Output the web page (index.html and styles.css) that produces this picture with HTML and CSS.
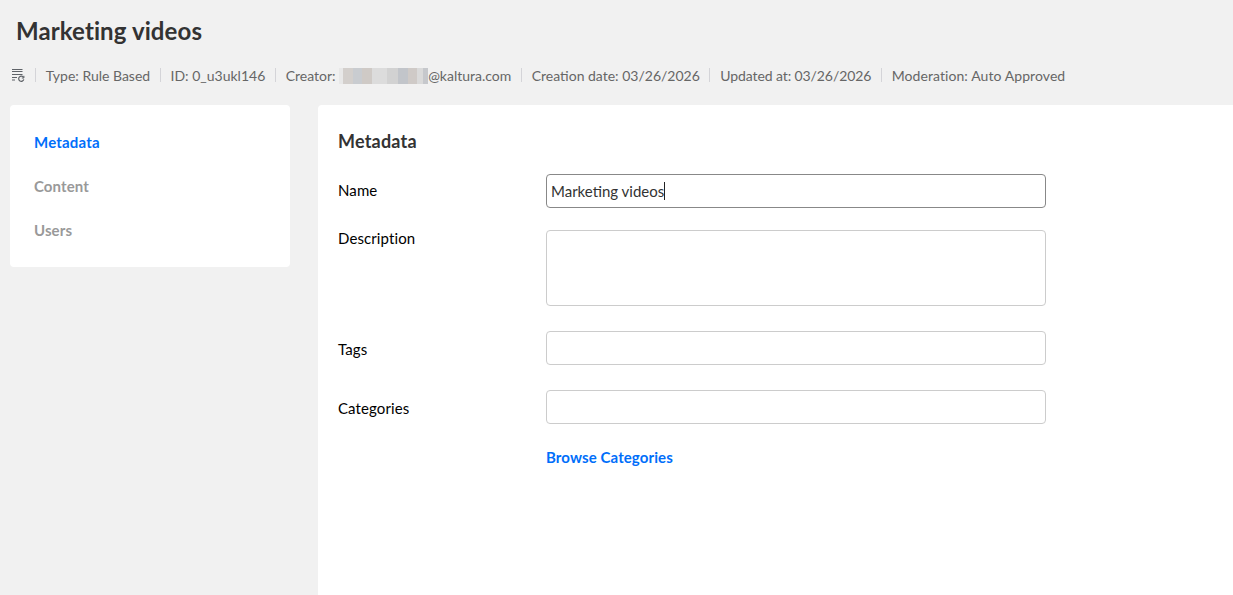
FILE: index.html
```html
<!DOCTYPE html>
<html lang="en">
<head>
<meta charset="utf-8">
<title>Marketing videos</title>
<link rel="stylesheet" href="styles.css">
</head>
<body>
<header class="head">
  <h1 class="title">Marketing videos</h1>
  <div class="meta">
    <svg class="meta-icon" width="14" height="14" viewBox="0 0 14 14" fill="none" stroke="#5f6368">
      <path d="M1 1.5h10.5M1 3.5h10.5M1 6.5h10.5M1 9.5h5M1 12h3" stroke-width="1.2"/>
      <path d="M12.6 9.6a2.6 2.6 0 1 0 .2 1.8" stroke-width="1.2"/>
      <path d="M12.9 7.8v2.2h-2.1" stroke-width="1"/>
    </svg>
    <span class="sep"></span><span>Type: Rule Based</span>
    <span class="sep"></span><span>ID: 0_u3ukl146</span>
    <span class="sep"></span><span class="creator">Creator: <span class="blur"></span>@kaltura.com</span>
    <span class="sep"></span><span>Creation date: 03/26/2026</span>
    <span class="sep"></span><span class="updated">Updated at: 03/26/2026</span>
    <span class="sep"></span><span class="moderation">Moderation: Auto Approved</span>
  </div>
</header>
<main class="layout">
  <nav class="side">
    <a class="side-item active">Metadata</a>
    <a class="side-item">Content</a>
    <a class="side-item">Users</a>
  </nav>
  <section class="panel">
    <h2 class="panel-title">Metadata</h2>
    <div class="row row-name"><label>Name</label><div class="field focus">Marketing videos<span class="caret"></span></div></div>
    <div class="row row-desc"><label>Description</label><div class="field area"></div></div>
    <div class="row row-tags"><label>Tags</label><div class="field"></div></div>
    <div class="row row-cats"><label>Categories</label><div class="field"></div></div>
    <a class="browse">Browse Categories</a>
  </section>
</main>
</body>
</html>
```
FILE: styles.css
```css
* { box-sizing: border-box; }
html, body { height: 100%; }
body {
  margin: 0;
  height: 595px;
  overflow: hidden;
  background: #f1f1f1;
  font-family: Lato, "Liberation Sans", sans-serif;
  color: #333;
}
.head { padding: 16px 0 0 16px; height: 105px; }
.title { margin: 0; font-size: 24px; line-height: 30px; font-weight: 700; color: #333; letter-spacing: 0.1px; }
.meta {
  display: flex;
  align-items: center;
  margin: 14px 0 0 -5px;
  height: 30px;
  font-size: 14px;
  color: #666;
}
.meta-icon { margin-right: 10px; }
.sep { width: 1px; height: 14px; background: #d4d4d8; margin: 0 9.8px 0 0; }
.meta span + .sep { margin-left: 9.6px; }
.updated { letter-spacing: -0.09px; }
.moderation { letter-spacing: 0.08px; }
.blur {
  display: inline-block;
  width: 89px;
  height: 16px;
  vertical-align: -3px;
  background: linear-gradient(90deg,
    #e8e8e8 0 5%, #d3cfcc 5% 16%, #c9ccd0 16% 26%, #cfcac6 26% 37%,
    #dcdcdc 37% 54%, #d2d2d2 54% 66%, #c2c5ca 66% 77%, #cfcac7 77% 88%, #dadada 88% 94%, #c6c8cc 94% 100%);
}
.layout { display: flex; height: 490px; }
.side {
  width: 280px;
  height: 162px;
  margin-left: 10px;
  background: #fff;
  border-radius: 4px;
  padding: 15px 24px;
  display: flex;
  flex-direction: column;
}
.side-item { font-size: 15px; line-height: 44px; font-weight: 700; color: #999; letter-spacing: 0.1px; }
.side-item.active { color: #006efa; letter-spacing: 0.2px; }
.panel {
  width: 915px;
  margin-left: 28px;
  background: #fff;
  border-radius: 4px 0 0 0;
  padding: 24px 20px;
}
.panel-title { margin: 0 0 21px; font-size: 18px; line-height: 24px; font-weight: 700; color: #333; letter-spacing: 0.2px; }
.row { display: flex; align-items: flex-start; font-size: 15px; }
.row label { width: 208px; color: #000; line-height: 18px; padding-top: 7px; letter-spacing: 0.1px; }
.field {
  width: 500px;
  height: 34px;
  border: 1px solid #ccc;
  border-radius: 4px;
  background: #fff;
  font-size: 15px;
  line-height: 32px;
  padding: 0 4px;
  color: #333;
  display: flex;
  align-items: center;
}
.field.focus { border-color: #888; }
.field.area { height: 76px; }
.caret { width: 1px; height: 18px; background: #222; }
.row-name { margin-bottom: 22px; }
.row-desc { margin-bottom: 25px; }
.row-desc label { padding-top: 0; line-height: 16px; }
.row-tags { margin-bottom: 25px; }
.row-tags label, .row-cats label { padding-top: 9px; }
.row-cats { margin-bottom: 23px; }
.browse { display: block; margin-left: 208px; font-size: 15px; line-height: 20px; font-weight: 700; color: #006efa; letter-spacing: 0.1px; }
```
